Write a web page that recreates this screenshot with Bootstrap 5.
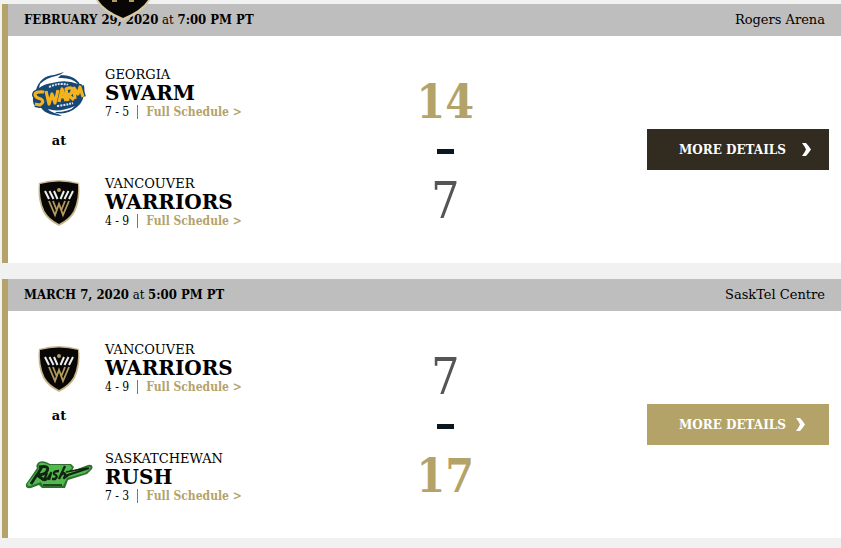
<!DOCTYPE html>
<html lang="en">
<head>
<meta charset="utf-8">
<meta name="viewport" content="width=device-width, initial-scale=1">
<title>Warriors Schedule</title>
<link href="https://cdn.jsdelivr.net/npm/bootstrap@5.3.0/dist/css/bootstrap.min.css" rel="stylesheet">
<style>
body { background: #f1f1f1; color: #000; font-family: "DejaVu Serif", serif; font-size: 13px; }
.slab-narrow, .game-date, .schedule-link { font-family: "DejaVu Serif Condensed", "DejaVu Serif", serif; }
.crest { top: 0; left: 96px; z-index: 2; }
.schedule { padding: 4px 0 10px 2px; gap: 16px; }
.game { border-left: 6px solid #b3a369; }
.game-head { background: #bebebe; line-height: 32px; padding: 0 16px; }
.game-body { display: grid; grid-template-columns: 47fr 11fr 42fr; padding: 30px 0 32px; }
.logo-cell { width: 97px; padding-left: 5px; flex: none; }
.logo-cell svg { display: block; }
.city { line-height: 18px; }
.team-name { font-size: 20px; font-weight: 700; line-height: 18px; margin: 0; }
.record { font-size: 12px; line-height: 20px; }
.divider { width: 1px; height: 14px; background: #777; margin: 0 8px; }
.schedule-link { color: #b3a369; font-weight: 700; font-size: 12px; text-decoration: none; }
.versus { line-height: 20px; font-weight: 700; padding: 9px 0 24px; }
.versus span { display: block; width: 102px; text-align: center; }
.scores { padding-top: 6px; }
.score { font-size: 50px; line-height: 50px; color: #555; }
.score.win { color: #b3a369; font-weight: 700; font-size: 46px; }
.dash { width: 17px; height: 5px; background: #0c1620; margin: 22px 0; }
.action { padding: 2px 12px 0 0; }
.btn-details { background: #322b1f; color: #fff; font-size: 12px; font-weight: 700; border: 0; border-radius: 0; width: 182px; height: 41px; padding: 0 18px 0 32px; }
.btn-details:hover { background: #b3a369; color: #fff; }
.btn-details.lit { background: #b3a369; padding-right: 24px; }
</style>
<script src="https://cdn.jsdelivr.net/npm/bootstrap@5.3.0/dist/js/bootstrap.bundle.min.js"></script>
</head>
<body>
<svg width="0" height="0" class="position-absolute" aria-hidden="true">
  <symbol id="warriors" viewBox="0 0 42 48">
    <path d="M1 4Q21-2 41 4Q43 20 37 33Q32 42 21 47Q10 42 5 33Q-1 20 1 4Z" fill="#c9b78c"/>
    <path d="M2 5Q21 0 40 5Q41 20 35.500 32Q31 40 21 45Q11 40 6.500 32Q1 20 2 5Z" fill="#080706"/>
    <path d="M7 12l4 8M11.500 12l4 8M16 12l3.500 8M35 12l-4 8M30.500 12l-4 8M26 12l-3.500 8" stroke="#eee" stroke-width="2"/>
    <circle cx="21" cy="11" r="2" fill="#b39a5e"/>
    <path d="M11 22l6 14 4-11 4 11 6-14M15 22l4 10M27 22l-4 10" fill="none" stroke="#b39a5e" stroke-width="1.800"/>
  </symbol>
  <symbol id="swarm" viewBox="0 0 54 46">
    <path d="M4 19Q8 5 22 4L32 1 28 4Q45 4 49 16L52 14Q54 29 45 36Q36 44 24 42L30 45Q12 44 8 35L2 34Q-1 27 4 19Z" fill="#174775"/>
    <path d="M8 13Q14 7 24 5L30 3 26 7Q40 6 46 13Q34 8 20 12Q12 13 7 17Z" fill="#fff"/>
    <path d="M16 38Q27 42 43 35Q38 41 23 41L26 43Q18 41 16 38Z" fill="#fff"/>
    <path d="M17 16Q28 11 36 14" fill="none" stroke="#dce6ee" stroke-width="2" stroke-dasharray="2 1"/>
    <path d="M25 35Q34 34 41 32" fill="none" stroke="#dce6ee" stroke-width="2" stroke-dasharray="2 1"/>
    <g fill="none" stroke="#174775" stroke-width="6" stroke-linejoin="round"><path d="M12 21Q3 20 3 24Q4 27 9 28Q13 31 8 34L3 33M14 20L17 33 20 23 23 32 26 19M27 31L30 18 34 30M28 26H33M36 30L34 18Q41 15 40 20 40 23 36 24L42 29M43 28L42 17 46 23 48 16 51 26"/></g>
    <g fill="none" stroke="#f6b21a" stroke-width="3.200" stroke-linejoin="round"><path d="M12 21Q3 20 3 24Q4 27 9 28Q13 31 8 34L3 33M14 20L17 33 20 23 23 32 26 19M27 31L30 18 34 30M28 26H33M36 30L34 18Q41 15 40 20 40 23 36 24L42 29M43 28L42 17 46 23 48 16 51 26"/></g>
  </symbol>
  <symbol id="rush" viewBox="0 0 68 34">
    <path d="M14 1Q19-1 25 3H46L49 6 47 10 63 4Q69 3 67 8L62 13 43 19 40 27H17L14 24 6 27Q0 28 1 23L8 13 12 7Q10 4 14 1Z" fill="#2d7130"/>
    <path d="M15 2Q19 1 24 4H45L47 7 43 11 64 5.500Q67 6 64 9L60 12 42 17 38 25H18L16 21 5 25Q1 25 3 22L10 13 14 7Q12 5 15 2Z" fill="#53b84d"/>
    <g fill="none" stroke="#102410" stroke-linejoin="round"><path d="M14 6Q25 4 22 10Q20 14 12 14L19 19M17 6L6 23" stroke-width="2.800"/><path d="M22 12L19 19Q22 20 26 12L24 19M34 10Q28 10 29 13 34 15 30 18L27 18M40 5L34 18M36 14Q41 10 40 15L39 17 43 14 64 7" stroke-width="2.300"/><path d="M41 11L62 7M18 24H37" stroke-width="1.500"/></g>
  </symbol>
  <symbol id="chevron" viewBox="0 0 9 13"><path d="M0 0H4Q6 2 9 6.500Q6 11 4 13H0Q3 9 4 6.500Q3 4 0 0Z" fill="currentColor"/></symbol>
</svg>

<svg class="crest position-absolute" width="54" height="21" viewBox="0 0 54 21" role="img" aria-label="Vancouver Warriors">
  <path d="M0 0H54Q48 12 27 21Q6 12 0 0Z" fill="#d8caa8"/>
  <path d="M2 0H52Q46 10 27 18Q8 10 2 0Z" fill="#080706"/>
  <path d="M17 0v1h4M33 1h4V0" fill="none" stroke="#b39a5e" stroke-width="2"/>
</svg>

<main class="schedule d-flex flex-column">
  <article class="game bg-white">
    <header class="game-head d-flex justify-content-between">
      <div class="game-date"><b>FEBRUARY 29, 2020</b> at <b>7:00 PM PT</b></div>
      <div>Rogers Arena</div>
    </header>
    <div class="game-body">
      <div>
        <div class="d-flex align-items-center">
          <div class="logo-cell d-flex justify-content-center"><svg width="54" height="46" role="img" aria-label="Georgia Swarm"><use href="#swarm"/></svg></div>
          <div>
            <div class="city">GEORGIA</div>
            <h2 class="team-name">SWARM</h2>
            <div class="record d-flex align-items-center"><span class="slab-narrow">7 - 5</span><span class="divider"></span><a class="schedule-link" href="#">Full Schedule &gt;</a></div>
          </div>
        </div>
        <div class="versus"><span>at</span></div>
        <div class="d-flex align-items-center">
          <div class="logo-cell d-flex justify-content-center"><svg width="42" height="48" role="img" aria-label="Vancouver Warriors"><use href="#warriors"/></svg></div>
          <div>
            <div class="city">VANCOUVER</div>
            <h2 class="team-name">WARRIORS</h2>
            <div class="record d-flex align-items-center"><span class="slab-narrow">4 - 9</span><span class="divider"></span><a class="schedule-link" href="#">Full Schedule &gt;</a></div>
          </div>
        </div>
      </div>
      <div class="scores d-flex flex-column align-items-center justify-content-center">
        <div class="score slab-narrow win">14</div>
        <div class="dash"></div>
        <div class="score slab-narrow">7</div>
      </div>
      <div class="action d-flex align-items-center justify-content-end">
        <button type="button" class="btn btn-details d-flex align-items-center justify-content-between"><span>MORE DETAILS</span><svg width="9" height="13" aria-hidden="true"><use href="#chevron"/></svg></button>
      </div>
    </div>
  </article>

  <article class="game bg-white">
    <header class="game-head d-flex justify-content-between">
      <div class="game-date"><b>MARCH 7, 2020</b> at <b>5:00 PM PT</b></div>
      <div>SaskTel Centre</div>
    </header>
    <div class="game-body">
      <div>
        <div class="d-flex align-items-center">
          <div class="logo-cell d-flex justify-content-center"><svg width="42" height="48" role="img" aria-label="Vancouver Warriors"><use href="#warriors"/></svg></div>
          <div>
            <div class="city">VANCOUVER</div>
            <h2 class="team-name">WARRIORS</h2>
            <div class="record d-flex align-items-center"><span class="slab-narrow">4 - 9</span><span class="divider"></span><a class="schedule-link" href="#">Full Schedule &gt;</a></div>
          </div>
        </div>
        <div class="versus"><span>at</span></div>
        <div class="d-flex align-items-center">
          <div class="logo-cell d-flex justify-content-center"><svg width="68" height="34" role="img" aria-label="Saskatchewan Rush"><use href="#rush"/></svg></div>
          <div>
            <div class="city">SASKATCHEWAN</div>
            <h2 class="team-name">RUSH</h2>
            <div class="record d-flex align-items-center"><span class="slab-narrow">7 - 3</span><span class="divider"></span><a class="schedule-link" href="#">Full Schedule &gt;</a></div>
          </div>
        </div>
      </div>
      <div class="scores d-flex flex-column align-items-center justify-content-center">
        <div class="score slab-narrow">7</div>
        <div class="dash"></div>
        <div class="score slab-narrow win">17</div>
      </div>
      <div class="action d-flex align-items-center justify-content-end">
        <button type="button" class="btn btn-details lit d-flex align-items-center justify-content-between"><span>MORE DETAILS</span><svg width="9" height="13" aria-hidden="true"><use href="#chevron"/></svg></button>
      </div>
    </div>
  </article>
</main>
</body>
</html>
